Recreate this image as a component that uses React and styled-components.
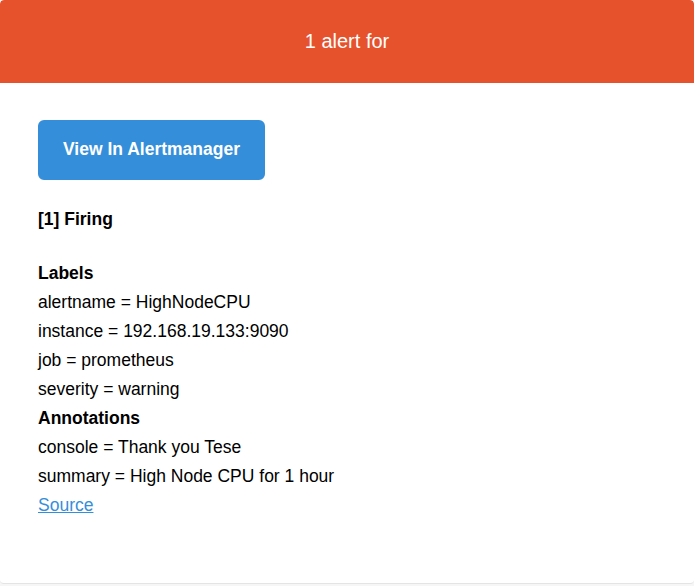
import React from "react";
import styled, { createGlobalStyle } from "styled-components";

const GlobalStyle = createGlobalStyle`
  html, body {
    margin: 0;
    padding: 0;
    background: #f6f6f6;
    font-family: "Liberation Sans", Arial, sans-serif;
    font-size: 17.5px;
    color: #000;
  }
`;

const labels = [
  ["alertname", "HighNodeCPU"],
  ["instance", "192.168.19.133:9090"],
  ["job", "prometheus"],
  ["severity", "warning"],
];

const annotations = [
  ["console", "Thank you Tese"],
  ["summary", "High Node CPU for 1 hour"],
];

const App = () => {
  return (
    <>
      <GlobalStyle />
      <Card>
        <Header>1 alert for</Header>
        <Content>
          <Block>
            <Button href="#">View In Alertmanager</Button>
          </Block>
          <Block>
            <strong>[1] Firing</strong>
          </Block>
          <Block>
            <Line>
              <strong>Labels</strong>
            </Line>
            {labels.map(([k, v]) => (
              <Line key={k}>
                {k} = {v}
              </Line>
            ))}
            <Line>
              <strong>Annotations</strong>
            </Line>
            {annotations.map(([k, v]) => (
              <Line key={k}>
                {k} = {v}
              </Line>
            ))}
            <Line>
              <SourceLink href="#">Source</SourceLink>
            </Line>
          </Block>
        </Content>
      </Card>
    </>
  );
};

const Card = styled.div`
  background: #fff;
  border-bottom: 1px solid #e4e4e4;
  border-radius: 4px;
  overflow: hidden;
`;

const Header = styled.div`
  background: #e6522c;
  color: #fff;
  font-size: 20px;
  font-weight: 500;
  text-align: center;
  height: 83px;
  line-height: 83px;
  border-radius: 4px 4px 0 0;
`;

const Content = styled.div`
  padding: 37px 37px 38px 38px;
`;

const Block = styled.div`
  padding-bottom: 25px;
  line-height: 29px;
`;

const Line = styled.div`
  line-height: 29px;
`;

const Button = styled.a`
  display: inline-block;
  box-sizing: border-box;
  height: 60px;
  line-height: 35px;
  border: solid #348eda;
  border-width: 12.5px 25px;
  border-radius: 6px;
  background: #348eda;
  color: #fff;
  font-weight: bold;
  text-decoration: none;
  vertical-align: top;
`;

const SourceLink = styled.a`
  color: #348eda;
  text-decoration: underline;
`;

export default App;
